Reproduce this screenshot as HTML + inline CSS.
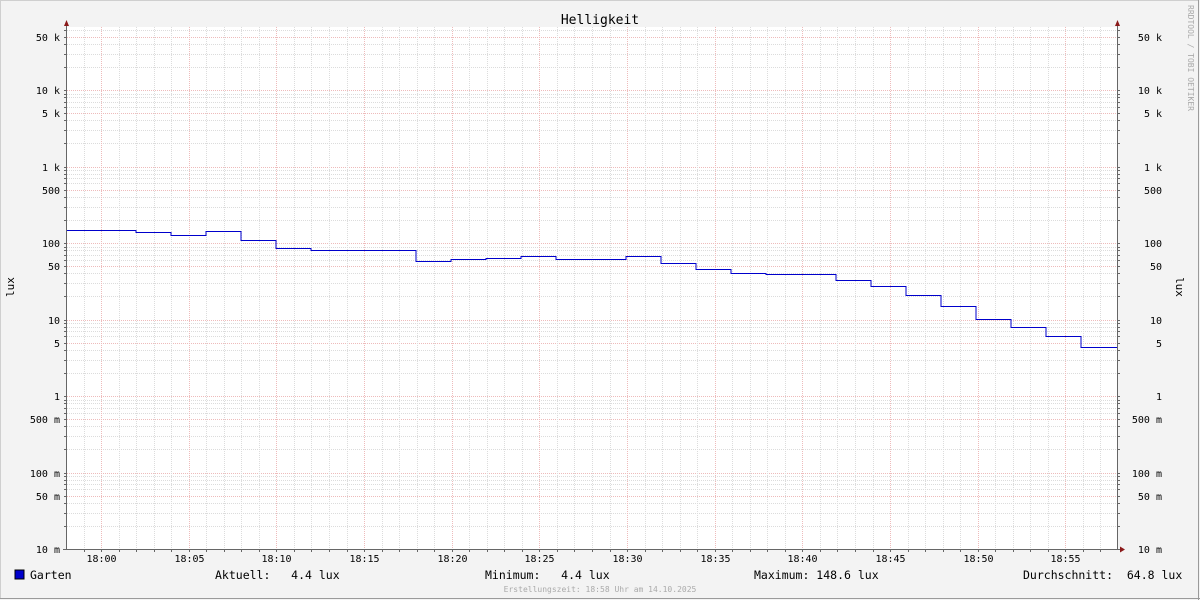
<!DOCTYPE html>
<html><head><meta charset="utf-8"><style>
html,body{margin:0;padding:0;background:#f3f3f3}
svg{display:block}
text{font-family:"DejaVu Sans Mono","Liberation Mono",monospace;fill:#000;white-space:pre}
</style></head><body>
<svg id="g" width="1200" height="600" xmlns="http://www.w3.org/2000/svg">
<rect x="0" y="0" width="1200" height="600" fill="#f3f3f3"/>
<rect x="0.5" y="0.5" width="1198" height="598" fill="none" stroke="#cfcfcf"/>
<line x1="0" y1="598.5" x2="1200" y2="598.5" stroke="#9a9a9a"/>
<line x1="1198.5" y1="0" x2="1198.5" y2="600" stroke="#9a9a9a"/>
<rect x="66" y="27" width="1052" height="522" fill="#fff"/>
<g id="grid"></g>
<g id="lbl" font-size="10"></g>
<text x="600" y="24" font-size="13" text-anchor="middle">Helligkeit</text>
<text transform="translate(14,287) rotate(-90)" font-size="11" text-anchor="middle">lux</text>
<text transform="translate(1176,287) rotate(90)" font-size="11" text-anchor="middle">lux</text>
<text transform="translate(1188,5) rotate(90)" font-size="8" style="fill:#aaa">RRDTOOL / TOBI OETIKER</text>
<rect x="15" y="570" width="9" height="9" fill="#0000cc" stroke="#000" stroke-width="1"/>
<g font-size="11.5">
<text x="30" y="579">Garten</text>
<text x="215" y="579">Aktuell:   4.4 lux</text>
<text x="485" y="579">Minimum:   4.4 lux</text>
<text x="754" y="579">Maximum: 148.6 lux</text>
<text x="1023" y="579">Durchschnitt:  64.8 lux</text>
</g>
<text x="600" y="592" font-size="8" text-anchor="middle" style="fill:#aaa">Erstellungszeit: 18:58 Uhr am 14.10.2025</text>
<polyline id="line" fill="none" stroke="#0000cc" stroke-width="1"/>
<line x1="66.5" y1="24" x2="66.5" y2="549" stroke="#666"/>
<line x1="1117.5" y1="24" x2="1117.5" y2="549" stroke="#666"/>
<line x1="63" y1="549.5" x2="1122" y2="549.5" stroke="#666"/>
<polygon points="64,26 69,26 66.5,20" fill="#8b1a1a"/>
<polygon points="1115,26 1120,26 1117.5,20" fill="#8b1a1a"/>
<polygon points="1120,546.5 1120,552.5 1125,549.5" fill="#8b1a1a"/>
</svg>
<script>
var NS="http://www.w3.org/2000/svg",g=document.getElementById('grid'),L=document.getElementById('lbl');
function Y(v){return 396-76.5*Math.log10(v);}
function X(t){return 66+17.533*t;}
function ln(x1,y1,x2,y2,c){var e=document.createElementNS(NS,'line');e.setAttribute('x1',x1);e.setAttribute('y1',y1);e.setAttribute('x2',x2);e.setAttribute('y2',y2);e.setAttribute('stroke',c);e.setAttribute('stroke-dasharray','1,1');g.appendChild(e);}
function tk(x1,y1,x2,y2){var e=document.createElementNS(NS,'line');e.setAttribute('x1',x1);e.setAttribute('y1',y1);e.setAttribute('x2',x2);e.setAttribute('y2',y2);e.setAttribute('stroke','#666');g.appendChild(e);}
function tx(x,y,s,a){var e=document.createElementNS(NS,'text');e.setAttribute('x',x);e.setAttribute('y',y);e.setAttribute('text-anchor',a);e.textContent=s;L.appendChild(e);}
var labs={};
labs['1e-2']='10 m';labs['5e-2']='50 m';labs['1e-1']='100 m';labs['5e-1']='500 m';labs['1e0']='1';labs['5e0']='5';labs['1e1']='10';labs['5e1']='50';labs['1e2']='100';labs['5e2']='500';labs['1e3']='1 k';labs['5e3']='5 k';labs['1e4']='10 k';labs['5e4']='50 k';
for(var d=-2;d<=4;d++){for(var m=1;m<=9;m++){var v=m*Math.pow(10,d);var y=Math.round(Y(v))+0.5;if(y<27||y>551)continue;var maj=(m==1||m==5);
if(y<549)ln(67,y,1117,y,maj?'#eebbbb':'#dcdcdc');
tk(64,y,67,y);tk(1117,y,1120,y);
if(maj){var k=m+'e'+d;var yy=Math.min(y,549.5);tx(60,yy+3.5,labs[k],'end');tx(1162,yy+3.5,labs[k],'end');}}}
for(var t=0;t<=60;t++){var x=Math.round(X(t))+0.5;if(x<=67||x>=1117)continue;var maj=((t+58)%5==0);
ln(x,27,x,549,maj?'#eebbbb':'#dcdcdc');
tk(x,549,x,552);
if(maj){var mn=((t-2)%60+60)%60;tx(x,562,'18:'+(mn<10?'0':'')+mn,'middle');}}
var seg=[[66,230],[136,232],[171,235],[206,231],[241,240],[276,248],[311,250],[416,261],[451,259],[486,258],[521,256],[556,259],[626,256],[661,263],[696,269],[731,273],[766,274],[836,280],[871,286],[906,295],[941,306],[976,319],[1011,327],[1046,336],[1081,347],[1118,347]];
var p=[];for(var i=0;i<seg.length-1;i++){p.push(seg[i][0]+','+(seg[i][1]+0.5));p.push(seg[i+1][0]+','+(seg[i][1]+0.5));}
document.getElementById('line').setAttribute('points',p.join(' '));
</script>
</body></html>
